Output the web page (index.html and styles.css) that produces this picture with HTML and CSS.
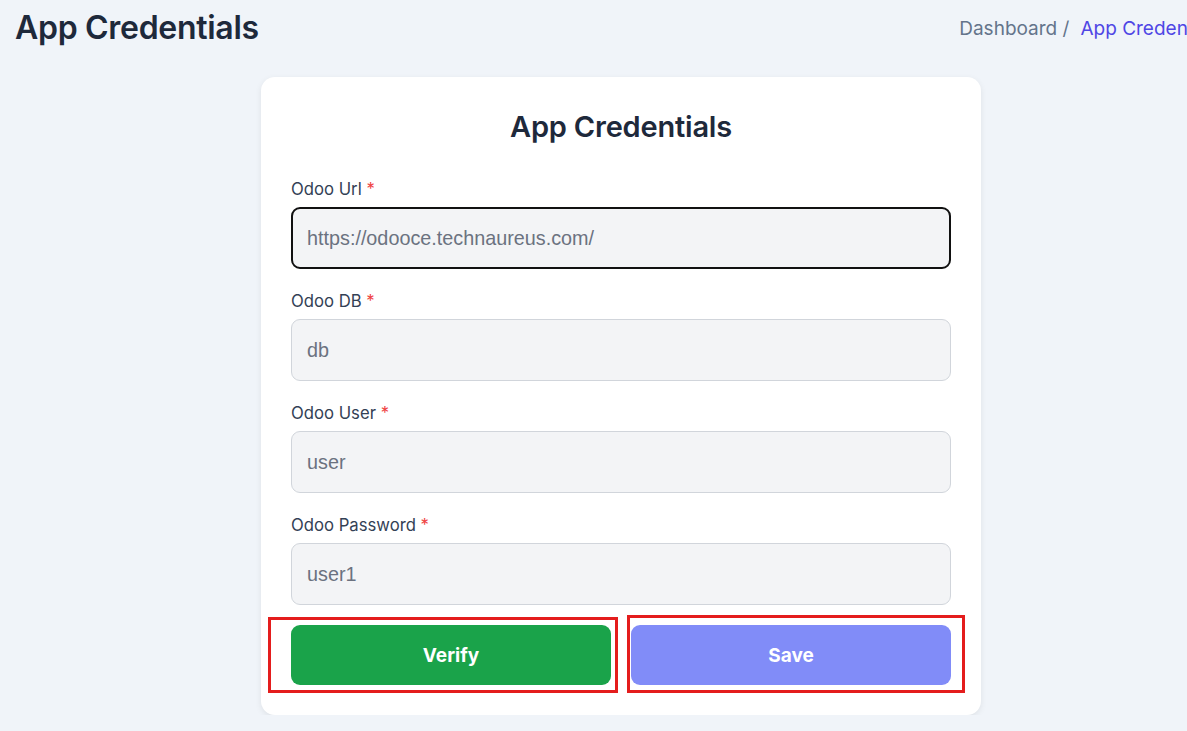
FILE: index.html
```html
<!DOCTYPE html>
<html>
<head>
  <title>App Credentials</title>
  <link rel="stylesheet" href="styles.css">
</head>
<body>

<div class="page">
  <div class="page-header">
    <h1>App Credentials</h1>
    <div class="breadcrumb">
      <span class="crumb">Dashboard /</span>
      <span class="crumb current">App Credentials</span>
    </div>
  </div>

  <div class="card">
    <h2>App Credentials</h2>

    <div class="field">
      <label for="url">Odoo Url <span class="req">*</span></label>
      <input type="text" id="url" class="focused" placeholder="https://odooce.technaureus.com/">
    </div>

    <div class="field">
      <label for="db">Odoo DB <span class="req">*</span></label>
      <input type="text" id="db" placeholder="db">
    </div>

    <div class="field">
      <label for="user">Odoo User <span class="req">*</span></label>
      <input type="text" id="user" placeholder="user">
    </div>

    <div class="field">
      <label for="pass">Odoo Password <span class="req">*</span></label>
      <input type="text" id="pass" placeholder="user1">
    </div>

    <div class="actions">
      <div class="btn-wrap">
        <button class="btn verify">Verify</button>
        <span class="mark mark-verify"></span>
      </div>
      <div class="btn-wrap">
        <button class="btn save">Save</button>
        <span class="mark mark-save"></span>
      </div>
    </div>
  </div>
</div>

</body>
</html>
```

FILE: styles.css
```css
html {
  overflow: hidden;
}

body {
  margin: 0;
  font-family: "Inter", "Noto Sans", sans-serif;
  background-color: #f0f4f9;
  color: #1f2937;
}

.page {
  width: 1242px;
}

.page-header {
  display: flex;
  justify-content: space-between;
  align-items: center;
  padding: 8px 15px;
}

.page-header h1 {
  margin: 0;
  font-size: 32px;
  line-height: 40px;
  font-weight: 600;
  color: #1e293b;
  letter-spacing: -0.3px;
}

.breadcrumb {
  display: flex;
  gap: 11px;
  font-size: 19px;
  white-space: nowrap;
  margin-right: 3px;
}

.crumb {
  color: #64748b;
}

.crumb.current {
  color: #4f46e5;
}

.card {
  width: 720px;
  box-sizing: border-box;
  margin: 21px auto 0;
  padding: 30px;
  background-color: white;
  border-radius: 14px;
  box-shadow: 0 2px 6px rgba(0, 0, 0, 0.08);
}

.card h2 {
  margin: 0 0 32px;
  text-align: center;
  font-size: 29px;
  line-height: 40px;
  font-weight: 600;
  color: #1e293b;
  letter-spacing: -0.2px;
}

.field {
  margin-bottom: 22px;
}

label {
  display: block;
  margin-bottom: 8px;
  font-size: 16.7px;
  line-height: 20px;
  color: #334155;
}

.req {
  color: #ef4444;
}

input {
  display: block;
  width: 100%;
  height: 62px;
  box-sizing: border-box;
  padding: 0 15px;
  border: 1px solid #d1d5db;
  border-radius: 9px;
  background-color: #f3f4f6;
  font-family: "Liberation Sans", Arial, sans-serif;
  font-size: 19.8px;
  outline: none;
}

input::placeholder {
  color: #6b7280;
}

input.focused {
  border: 2px solid #111;
  padding: 0 14px;
}

.actions {
  display: grid;
  grid-template-columns: 1fr 1fr;
  gap: 20px;
  margin-top: -2px;
}

.btn-wrap {
  position: relative;
}

.btn {
  display: block;
  width: 100%;
  height: 60px;
  border: none;
  border-radius: 9px;
  color: white;
  font-family: "Inter", sans-serif;
  font-size: 19px;
  font-weight: 700;
  cursor: pointer;
}

.verify {
  background-color: #1aa34a;
}

.save {
  background-color: #818cf8;
}

/* red annotation boxes from the screenshot */
.mark {
  position: absolute;
  border: 3px solid #e41d1d;
  pointer-events: none;
}

.mark-verify {
  left: -23px;
  right: -7px;
  top: -8px;
  bottom: -8px;
}

.mark-save {
  left: -4px;
  right: -14px;
  top: -10px;
  bottom: -8px;
}
```
